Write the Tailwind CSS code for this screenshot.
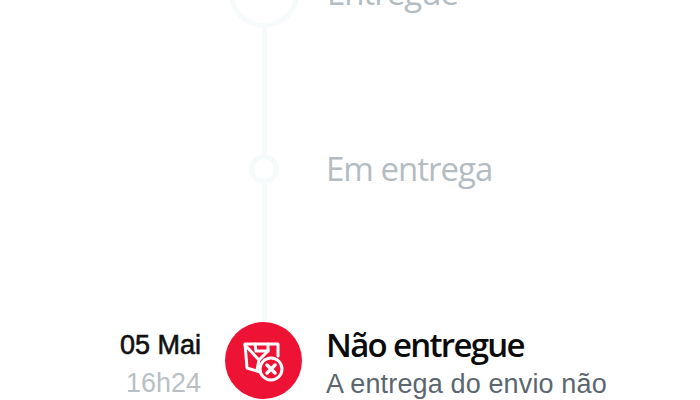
<!DOCTYPE html>
<html lang="en">
<head>
    <meta charset="UTF-8">
    <script src="https://cdn.jsdelivr.net/npm/@tailwindcss/browser@4"></script>
    <title>Rastreio</title>
</head>
<body class="bg-white">
<div class="h-[400px] overflow-hidden">
    <div class="-mt-[42px]">
        <!-- entregue -->
        <div class="flex h-[70px] items-center">
            <div class="w-[228px]"></div>
            <div class="flex w-[72px] justify-center">
                <div class="h-[70px] w-[70px] rounded-full border-[5px] border-[#f7fafa]"></div>
            </div>
            <p class="ml-[27px] font-['Open_Sans',sans-serif] text-[33px] leading-[40px] tracking-[-1px] text-[#b4bcc2]">Entregue</p>
        </div>
        <div class="ml-[262px] h-[126px] w-[5px] bg-[#f7fafa]"></div>
        <!-- em entrega -->
        <div class="flex h-[30px] items-center">
            <div class="w-[228px]"></div>
            <div class="flex w-[72px] justify-center">
                <div class="h-[30px] w-[30px] rounded-full border-[5px] border-[#f7fafa]"></div>
            </div>
            <p class="ml-[26px] font-['Open_Sans',sans-serif] text-[33px] leading-[40px] tracking-[-1px] text-[#b4bcc2]">Em entrega</p>
        </div>
        <div class="ml-[262px] h-[138px] w-[5px] bg-[#f7fafa]"></div>
        <!-- nao entregue -->
        <div class="flex items-start">
            <div class="w-[201px] pt-[7px] text-right font-['Liberation_Sans',sans-serif]">
                <p class="text-[27px] leading-[32px] text-[#111] [-webkit-text-stroke:0.6px_#111]">05 Mai</p>
                <p class="mt-[6px] text-[27px] leading-[32px] text-[#b9c0c5]">16h24</p>
            </div>
            <div class="ml-[24px] flex h-[77px] w-[77px] items-center justify-center rounded-full bg-[#ee1234]">
                <svg width="48" height="50" viewBox="0 0 48 50" fill="none" stroke="#fff" stroke-width="3" stroke-linejoin="round" stroke-linecap="round">
                    <path d="M20 36 L7 32 L5 8 L38 8 L38 20"/>
                    <path d="M15 8 L16 15 L28 15 L28 8"/>
                    <path d="M5 9 L19 24 M28 15 L19 24 L17 34"/>
                    <circle cx="31" cy="33" r="11"/>
                    <path d="M27 29 L35 37 M35 29 L27 37" stroke-width="3.5"/>
                </svg>
            </div>
            <div class="ml-[24px] pt-[3px]">
                <p class="font-['Open_Sans',sans-serif] text-[33px] leading-[40px] font-semibold tracking-[-1.7px] text-[#0b0b0b]">Não entregue</p>
                <p class="mt-[3px] font-['Liberation_Sans',sans-serif] text-[27px] leading-[32px] tracking-[0.14px] text-[#5b6670]">A entrega do envio não</p>
            </div>
        </div>
    </div>
</div>
</body>
</html>
